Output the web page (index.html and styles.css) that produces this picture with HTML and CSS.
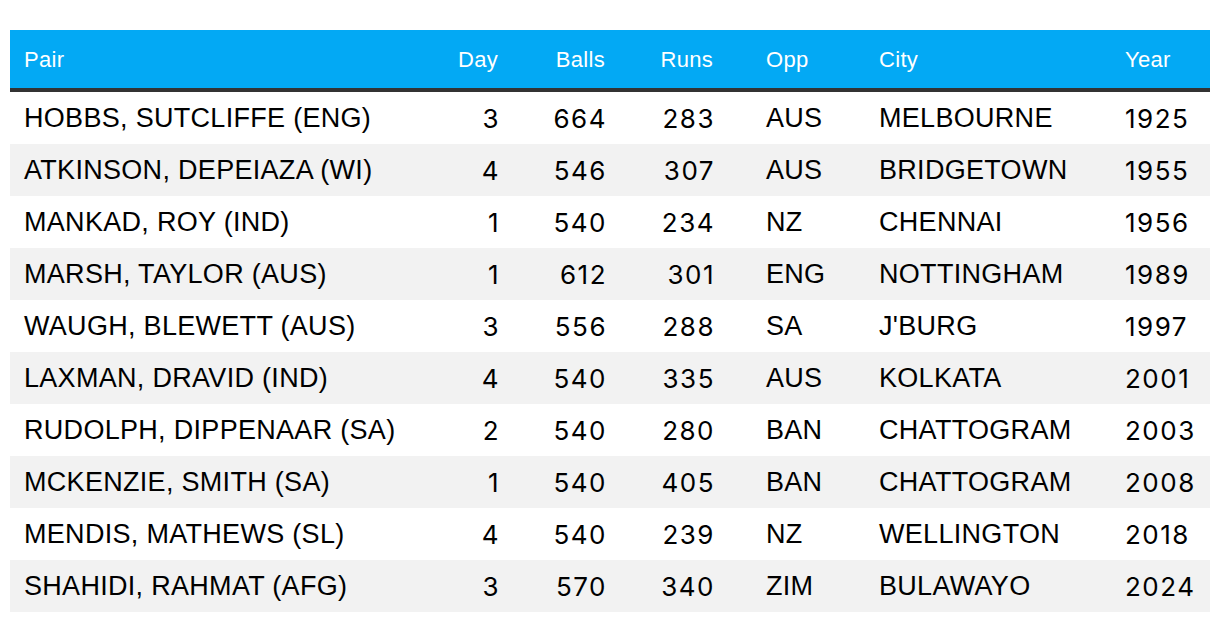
FILE: index.html
```html
<!DOCTYPE html>
<html lang="en">
<head>
<meta charset="utf-8">
<title>Partnerships</title>
<link rel="stylesheet" href="styles.css">
</head>
<body>
<div class="wrap">
<table class="stats">
  <colgroup>
    <col class="c-pair"><col class="c-day"><col class="c-balls"><col class="c-runs"><col class="c-opp"><col class="c-city"><col class="c-year">
  </colgroup>
  <thead>
    <tr>
      <th class="pair">Pair</th>
      <th class="num">Day</th>
      <th class="num">Balls</th>
      <th class="num">Runs</th>
      <th class="opp">Opp</th>
      <th class="txt">City</th>
      <th class="txt">Year</th>
    </tr>
  </thead>
  <tbody>
    <tr><td class="pair">HOBBS, SUTCLIFFE (ENG)</td><td class="num">3</td><td class="num">664</td><td class="num">283</td><td class="opp">AUS</td><td class="txt">MELBOURNE</td><td class="yr">1925</td></tr>
    <tr><td class="pair">ATKINSON, DEPEIAZA (WI)</td><td class="num">4</td><td class="num">546</td><td class="num">307</td><td class="opp">AUS</td><td class="txt">BRIDGETOWN</td><td class="yr">1955</td></tr>
    <tr><td class="pair">MANKAD, ROY (IND)</td><td class="num">1</td><td class="num">540</td><td class="num">234</td><td class="opp">NZ</td><td class="txt">CHENNAI</td><td class="yr">1956</td></tr>
    <tr><td class="pair">MARSH, TAYLOR (AUS)</td><td class="num">1</td><td class="num">612</td><td class="num">301</td><td class="opp">ENG</td><td class="txt">NOTTINGHAM</td><td class="yr">1989</td></tr>
    <tr><td class="pair">WAUGH, BLEWETT (AUS)</td><td class="num">3</td><td class="num">556</td><td class="num">288</td><td class="opp">SA</td><td class="txt">J'BURG</td><td class="yr">1997</td></tr>
    <tr><td class="pair">LAXMAN, DRAVID (IND)</td><td class="num">4</td><td class="num">540</td><td class="num">335</td><td class="opp">AUS</td><td class="txt">KOLKATA</td><td class="yr">2001</td></tr>
    <tr><td class="pair">RUDOLPH, DIPPENAAR (SA)</td><td class="num">2</td><td class="num">540</td><td class="num">280</td><td class="opp">BAN</td><td class="txt">CHATTOGRAM</td><td class="yr">2003</td></tr>
    <tr><td class="pair">MCKENZIE, SMITH (SA)</td><td class="num">1</td><td class="num">540</td><td class="num">405</td><td class="opp">BAN</td><td class="txt">CHATTOGRAM</td><td class="yr">2008</td></tr>
    <tr><td class="pair">MENDIS, MATHEWS (SL)</td><td class="num">4</td><td class="num">540</td><td class="num">239</td><td class="opp">NZ</td><td class="txt">WELLINGTON</td><td class="yr">2018</td></tr>
    <tr><td class="pair">SHAHIDI, RAHMAT (AFG)</td><td class="num">3</td><td class="num">570</td><td class="num">340</td><td class="opp">ZIM</td><td class="txt">BULAWAYO</td><td class="yr">2024</td></tr>
  </tbody>
</table>
</div>
</body>
</html>
```
FILE: styles.css
```css
html, body {
  margin: 0;
  padding: 0;
  background: #ffffff;
}
.wrap {
  padding: 30px 10px 10px 10px;
}
.stats {
  width: 1200px;
  table-layout: fixed;
  border-collapse: collapse;
  font-family: "Liberation Sans", Arial, sans-serif;
  color: #000;
}
.c-pair { width: 395px; }
.c-day { width: 107px; }
.c-balls { width: 107px; }
.c-runs { width: 108px; }
.c-opp { width: 138px; }
.c-city { width: 246px; }
.c-year { width: 99px; }

.stats th, .stats td {
  padding: 0 14px;
  white-space: nowrap;
}
.stats thead tr {
  background: #03a9f4;
  border-bottom: 4px solid #333333;
}
.stats th {
  height: 56px;
  padding-top: 2px;
  color: #ffffff;
  font-weight: 400;
  font-size: 22px;
  letter-spacing: 0.3px;
}
.stats td {
  height: 52px;
  font-size: 27px;
  font-weight: 400;
  letter-spacing: 0.3px;
}
.stats tbody tr:nth-child(even) {
  background: #f2f2f2;
}
.pair, .txt, .yr { text-align: left; }
.num { text-align: right; }
.stats td.num, .stats td.yr {
  font-family: Inter, "Liberation Sans", Arial, sans-serif;
  font-size: 26px;
  letter-spacing: 1.5px;
}
.stats td.num { padding-right: 12px; }
.stats th.num { padding-right: 14px; }
.opp { text-align: left; }
.stats .opp { padding-left: 39px; }
```
